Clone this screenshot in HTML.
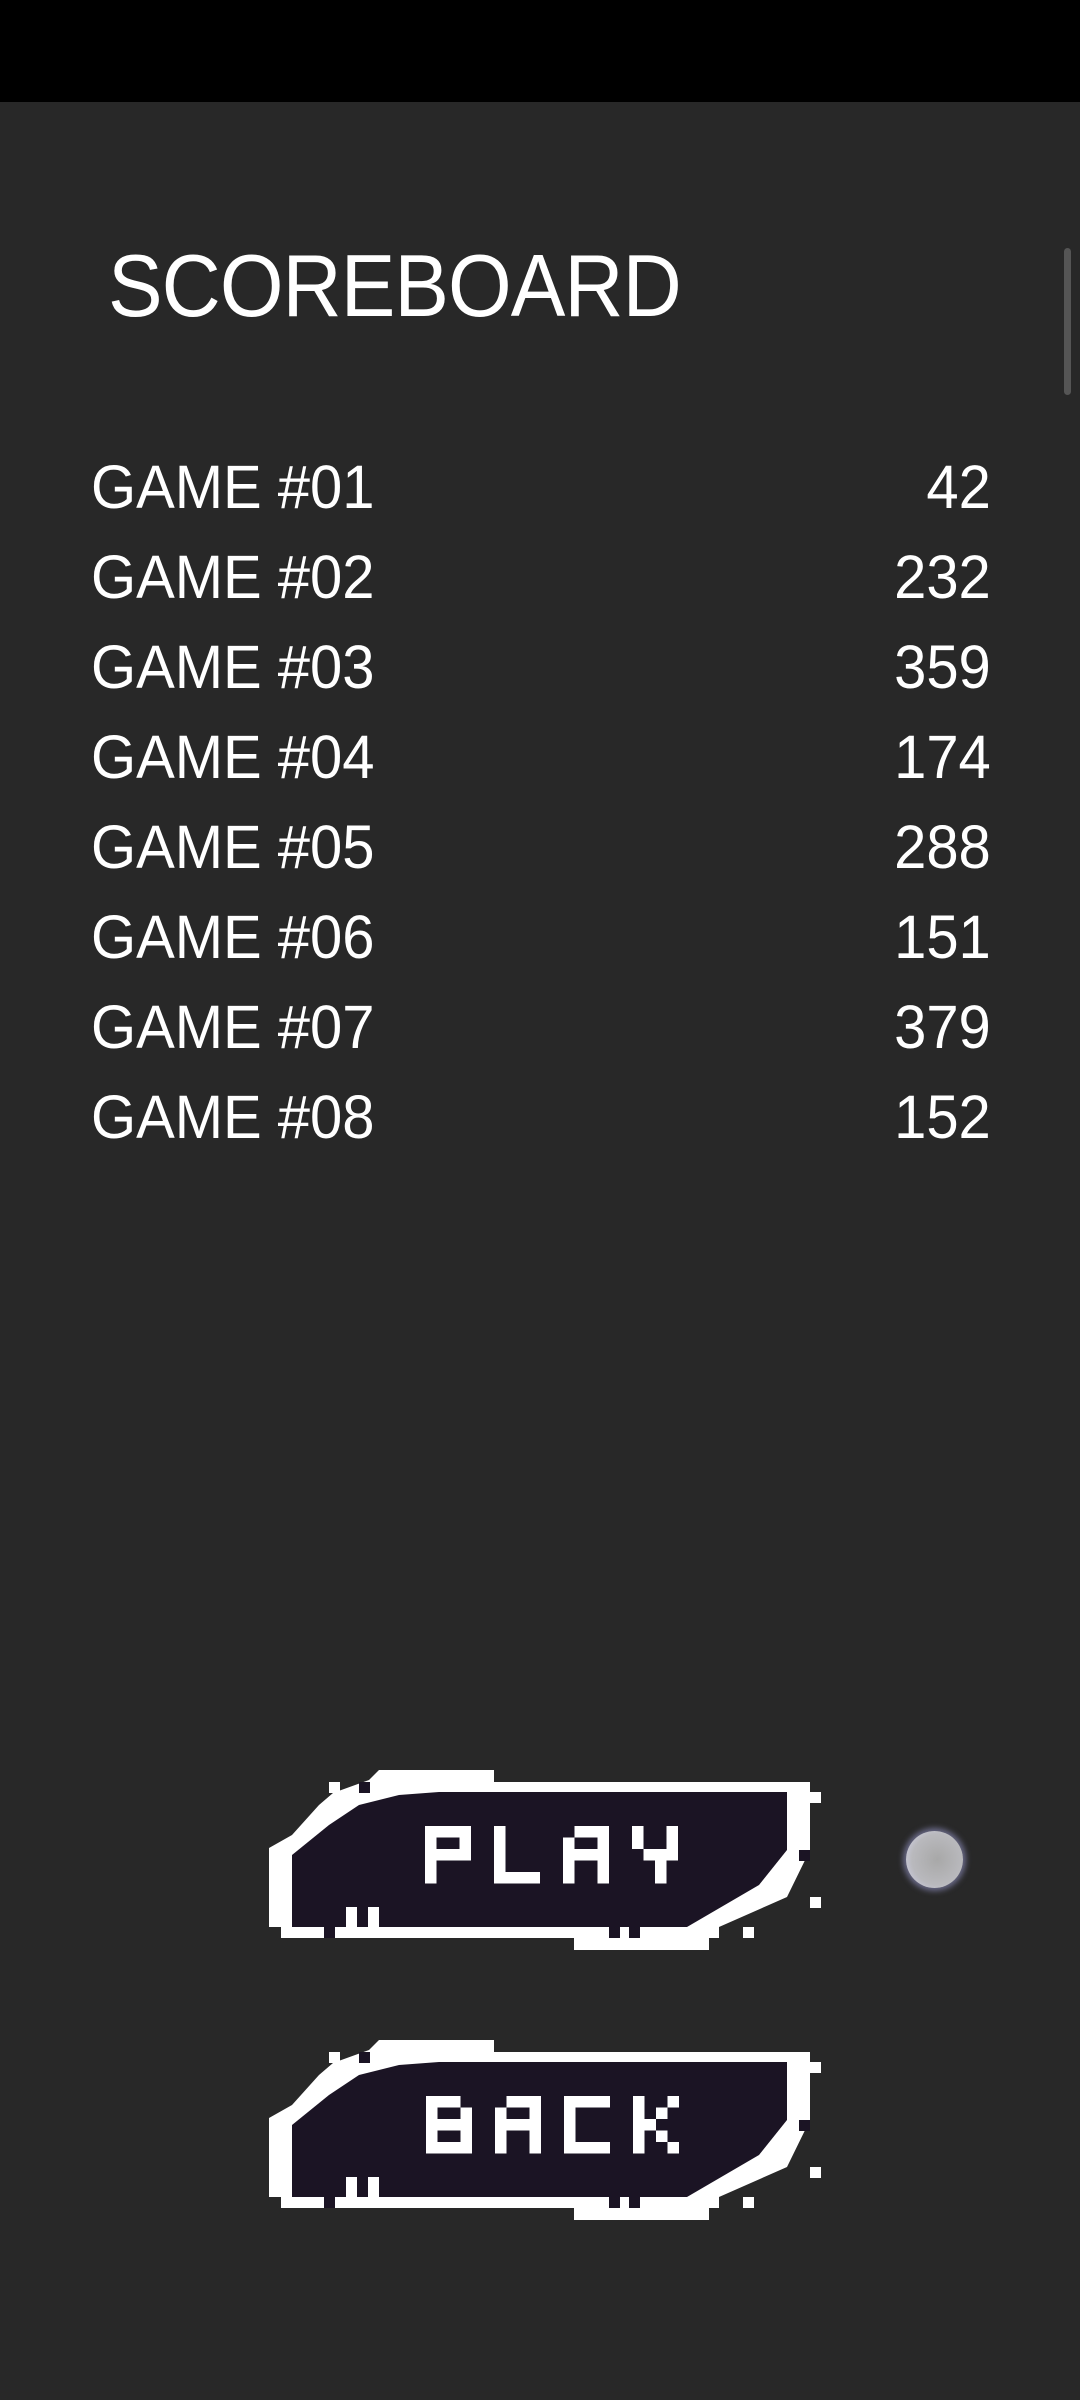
<!DOCTYPE html>
<html><head><meta charset="utf-8"><style>
html,body{margin:0;padding:0}
body{width:1080px;height:2400px;background:#282828;position:relative;overflow:hidden;font-family:"Liberation Sans",sans-serif;color:#fff}
.sb{position:absolute;left:0;top:0;width:1080px;height:102px;background:#000}
.title{position:absolute;left:108px;top:236px;font-size:88px;line-height:100px;letter-spacing:-1px;transform:scaleX(0.93);transform-origin:left}
.row{position:absolute;left:91px;width:900px;font-size:61px;line-height:70px;height:70px}
.row b{font-weight:normal;display:inline-block;transform:scaleX(0.95);transform-origin:left}
.row span{position:absolute;right:0;top:0;transform:scaleX(0.95);transform-origin:right}
.scroll{position:absolute;left:1064px;top:248px;width:7px;height:147px;background:#555;border-radius:4px}
.dot{position:absolute;left:906px;top:1831px;width:57px;height:57px;border-radius:50%;background:radial-gradient(circle at 55% 50%,#a8a8a8,#b9b9bd 60%,#c8c8d8 80%);box-shadow:0 0 6px 3px #6a6a88}
</style></head><body>
<div class="sb"></div>
<div class="title">SCOREBOARD</div>
<div class="scroll"></div>
<div class="row" style="top:452px"><b>GAME #01</b><span>42</span></div>
<div class="row" style="top:542px"><b>GAME #02</b><span>232</span></div>
<div class="row" style="top:632px"><b>GAME #03</b><span>359</span></div>
<div class="row" style="top:722px"><b>GAME #04</b><span>174</span></div>
<div class="row" style="top:812px"><b>GAME #05</b><span>288</span></div>
<div class="row" style="top:902px"><b>GAME #06</b><span>151</span></div>
<div class="row" style="top:992px"><b>GAME #07</b><span>379</span></div>
<div class="row" style="top:1082px"><b>GAME #08</b><span>152</span></div>
<svg width="1080" height="2400" style="position:absolute;left:0;top:0">
<defs>
<g id="btn">
<polygon fill="#fff" points="128,15 225,15 225,27 541,27 541,95 518,142 450,172 450,183 440,183 440,195 305,195 305,183 12,183 12,172 0,172 0,93 23,80 50,50 64,38 100,25 110,15"/>
<polygon fill="#1b1424" points="170,37 518,37 518,95 490,130 418,172 23,172 23,100 60,70 90,50 130,40"/>
<rect x="60" y="27" width="11" height="11" fill="#fff"/>
<rect x="90" y="27" width="11" height="11" fill="#1b1424"/>
<rect x="541" y="37" width="11" height="11" fill="#fff"/>
<rect x="530" y="95" width="11" height="11" fill="#1b1424"/>
<rect x="541" y="142" width="11" height="11" fill="#fff"/>
<rect x="474" y="172" width="11" height="11" fill="#fff"/>
<rect x="77" y="152" width="11" height="20" fill="#fff"/>
<rect x="99" y="152" width="11" height="20" fill="#fff"/>
<rect x="55" y="172" width="11" height="11" fill="#1b1424"/>
<rect x="340" y="172" width="11" height="11" fill="#1b1424"/>
<rect x="360" y="172" width="11" height="11" fill="#1b1424"/>
</g>
</defs>
<use href="#btn" x="269" y="1755"/>
<use href="#btn" x="269" y="2025"/>
<g fill="#fff">
<g transform="translate(425,1826) scale(11.5)">
<path d="M0 0h4v3h-3v2h-1zM1 1v1h2v-1z" fill-rule="evenodd"/>
<path d="M6 0h1v4h3v1h-4z"/>
<path d="M13 0h3v5h-1v-2h-2v2h-1v-4h1zM13 1v1h2v-1z" fill-rule="evenodd"/>
<path d="M18 0h1v2h2v-2h1v3h-1v2h-1v-2h-1v-1h-1z"/>
</g>
<g transform="translate(426,2096) scale(11.5)">
<path d="M0 0h3v1h1v4h-4zM1 1v1h2v-1zM1 3v1h2v-1z" fill-rule="evenodd"/>
<path d="M7 0h3v5h-1v-2h-2v2h-1v-4h1zM7 1v1h2v-1z" fill-rule="evenodd"/>
<path d="M12 0h4v1h-3v3h3v1h-4z"/>
<path d="M18 0h1v2h1v-1h1v-1h1v1h-1v1h-1v1h1v1h1v1h-1v-1h-1v-1h-1v2h-1z"/>
</g>
</g>
</svg>
<div class="dot"></div>
</body></html>
